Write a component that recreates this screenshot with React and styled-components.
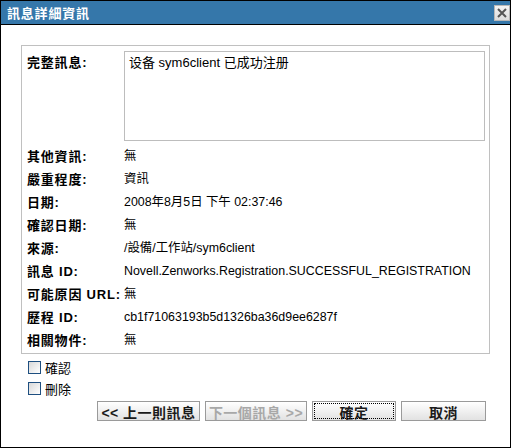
import {createGlobalStyle} from "styled-components";
import styled from "styled-components";

const GlobalStyle = createGlobalStyle`
  html, body {
    margin: 0;
    padding: 0;
    background: #ffffff;
  }
  * {
    box-sizing: border-box;
  }
`;

const FONT = `"Liberation Sans", "Noto Sans CJK TC", sans-serif`;

const Window = styled.div`
  width: 511px;
  height: 448px;
  border: 1px solid #000000;
  background: #ffffff;
  display: flex;
  flex-direction: column;
  font-family: ${FONT};
  color: #000000;
`;

const TitleBar = styled.div`
  height: 24px;
  flex: none;
  background: #3577aa;
  border-bottom: 1px solid #000000;
  display: flex;
  align-items: center;
  justify-content: space-between;
  padding: 0 0 0 6px;

  .title {
    color: #ffffff;
    font-size: 13px;
    font-weight: 700;
    letter-spacing: 0.8px;
  }
`;

const CloseButton = styled.button`
  width: 16px;
  height: 16px;
  margin-top: 1px;
  padding: 0;
  border: 1px solid #b8b8b8;
  background: linear-gradient(#f4f4f4, #dcdcdc);
  display: flex;
  align-items: center;
  justify-content: center;
`;

const Body = styled.div`
  flex: 1;
  padding: 20px 20px 0 20px;
  display: flex;
  flex-direction: column;
`;

const GroupBox = styled.div`
  border: 1px solid #c0c0c0;
  padding: 5px 4px 1px 5px;
`;

const Row = styled.div`
  display: grid;
  grid-template-columns: 97px 1fr;
  line-height: 23px;
  height: ${p => p.tall ? 'auto' : '23px'};
  margin-bottom: ${p => p.tall ? 4 : 0}px;
`;

const Label = styled.div`
  font-size: 13px;
  font-weight: 700;
  letter-spacing: 0.8px;
  white-space: nowrap;
`;

const Value = styled.div`
  font-size: 12.4px;
  white-space: nowrap;
`;

const MessageBox = styled.div`
  height: 90px;
  border: 1px solid #bdbdbd;
  padding: 0 4px;
  font-size: 13px;
  line-height: 21px;
`;

const CheckList = styled.div`
  margin-top: 3px;
  padding-left: 7px;
`;

const CheckRow = styled.label`
  display: flex;
  align-items: center;
  height: 21px;
  gap: 4px;
  font-size: 13px;
`;

const CheckBox = styled.span`
  width: 13px;
  height: 13px;
  border: 1px solid #1e4f80;
  background: linear-gradient(135deg, #d8d8d8, #ffffff);
`;

const ButtonRow = styled.div`
  display: flex;
  justify-content: flex-end;
  gap: 5px;
  margin-top: 2px;
  padding-right: 4px;
`;

const Button = styled.button`
  width: ${p => p.w}px;
  height: 20px;
  padding: 0;
  border: 1px solid #9a9a9a;
  background: linear-gradient(#ffffff, #e2e2e2);
  font-family: ${FONT};
  font-size: 14px;
  font-weight: 700;
  color: ${p => p.disabled ? '#a8a8a8' : '#1a1a1a'};
  position: relative;
  letter-spacing: 0.5px;

  ${p => p.focused && `
    &::after {
      content: "";
      position: absolute;
      inset: 1px;
      border: 1px dotted #000000;
    }
  `}
`;

const details = [
  ['其他資訊:', '無'],
  ['嚴重程度:', '資訊'],
  ['日期:', '2008年8月5日 下午 02:37:46'],
  ['確認日期:', '無'],
  ['來源:', '/設備/工作站/sym6client'],
  ['訊息 ID:', 'Novell.Zenworks.Registration.SUCCESSFUL_REGISTRATION'],
  ['可能原因 URL:', '無'],
  ['歷程 ID:', 'cb1f71063193b5d1326ba36d9ee6287f'],
  ['相關物件:', '無'],
];

const App = () => {
  return (
    <>
      <GlobalStyle/>
      <Window>
        <TitleBar>
          <span className="title">訊息詳細資訊</span>
          <CloseButton aria-label="close">
            <svg width="12" height="12" viewBox="0 0 12 12">
              <path d="M2 2 L10 10 M10 2 L2 10" stroke="#555555" strokeWidth="2"/>
            </svg>
          </CloseButton>
        </TitleBar>
        <Body>
          <GroupBox>
            <Row tall>
              <Label>完整訊息:</Label>
              <MessageBox>设备 sym6client 已成功注册</MessageBox>
            </Row>
            {
              details.map(([label, value]) => (
                <Row key={label}>
                  <Label>{label}</Label>
                  <Value>{value}</Value>
                </Row>
              ))
            }
          </GroupBox>
          <CheckList>
            <CheckRow><CheckBox/>確認</CheckRow>
            <CheckRow><CheckBox/>刪除</CheckRow>
          </CheckList>
          <ButtonRow>
            <Button w={103}>&lt;&lt; 上一則訊息</Button>
            <Button w={102} disabled>下一個訊息 &gt;&gt;</Button>
            <Button w={84} focused>確定</Button>
            <Button w={85}>取消</Button>
          </ButtonRow>
        </Body>
      </Window>
    </>
  );
};

export default App;
